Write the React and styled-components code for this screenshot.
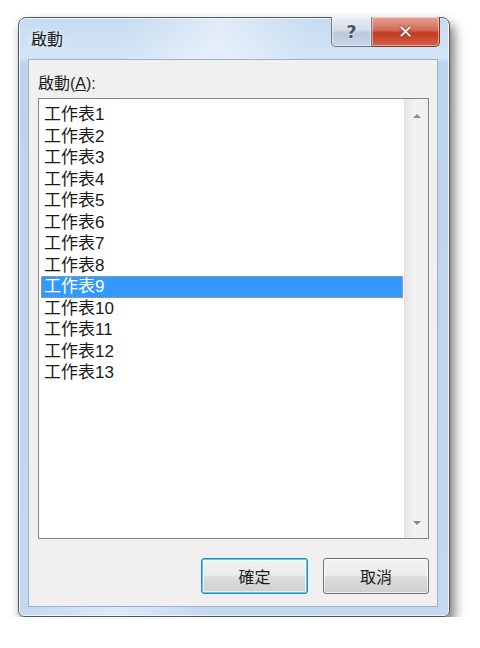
import React from 'react';
import styled, { createGlobalStyle } from 'styled-components';

const GlobalStyle = createGlobalStyle`
	body {
		margin: 0;
		background: #ffffff;
		font-family: "Liberation Sans", "Noto Sans CJK TC", sans-serif;
	}
`;

const Window = styled.div`
	box-sizing: border-box;
	width: 432px;
	height: 600px;
	margin: 17px 0 0 18px;
	display: flex;
	flex-direction: column;
	padding: 0 11px 9px 9px;
	border: 1px solid #505a66;
	border-radius: 8px 8px 6px 6px;
	background:
		linear-gradient(100deg, rgba(255, 255, 255, 0) 20%, rgba(255, 255, 255, 0.45) 38%, rgba(255, 255, 255, 0) 55%),
		linear-gradient(180deg, #c6dbf1 0%, #d4e4f6 40px, #bdd4ee 45px, #c3d8f1 100%);
	box-shadow:
		inset 0 0 0 1px rgba(255, 255, 255, 0.7),
		4px 7px 12px rgba(0, 0, 0, 0.55);
`;

const TitleBar = styled.div`
	height: 41px;
	display: flex;
	justify-content: space-between;
	align-items: flex-start;
`;

const Title = styled.div`
	padding: 12px 0 0 3px;
	font-size: 16px;
	line-height: 20px;
	color: #1b1b1b;
	text-shadow: 0 0 6px rgba(255, 255, 255, 0.9);
`;

const CaptionButtons = styled.div`
	display: flex;
	margin-right: -2px;
	margin-top: -1px;
`;

const CaptionButton = styled.div`
	box-sizing: border-box;
	width: ${({ wide }) => (wide ? 68 : 41)}px;
	height: 30px;
	display: flex;
	align-items: center;
	justify-content: center;
	border: 1px solid ${({ danger }) => (danger ? '#7d3a34' : '#6d7889')};
	border-top: none;
	border-radius: ${({ danger }) => (danger ? '0 0 5px 0' : '0 0 0 5px')};
	border-left: ${({ danger }) => (danger ? 'none' : '1px solid #6d7889')};
	background: ${({ danger }) =>
		danger
			? 'linear-gradient(180deg, #e7a396 0%, #d56b58 45%, #c2391f 55%, #d4624c 100%)'
			: 'linear-gradient(180deg, #e9eef5 0%, #d4dde9 45%, #bac8da 55%, #c9d6e6 100%)'};
	box-shadow: inset 0 0 0 1px rgba(255, 255, 255, 0.45);
	color: ${({ danger }) => (danger ? '#ffffff' : '#4a5564')};
	font-family: "DejaVu Sans", sans-serif;
	font-weight: bold;
	font-size: ${({ danger }) => (danger ? 18 : 18)}px;
	text-shadow: ${({ danger }) =>
		danger ? '0 0 2px #6b2016, 0 0 1px #6b2016' : '0 0 2px #ffffff, 0 0 1px #ffffff'};
`;

const Panel = styled.div`
	flex: 1;
	display: flex;
	flex-direction: column;
	background: #f0f0f0;
	border: 1px solid #9fb1c6;
	padding: 14px 8px 12px 9px;
`;

const Label = styled.div`
	font-size: 16px;
	line-height: 20px;
	color: #1e1e1e;
	margin-bottom: 4px;

	& u {
		text-decoration: underline;
	}
`;

const ListBox = styled.div`
	box-sizing: border-box;
	height: 441px;
	display: flex;
	background: #ffffff;
	border: 1px solid #828790;
`;

const Items = styled.div`
	flex: 1;
	padding: 5px 1px 0 2px;
`;

const Item = styled.div`
	box-sizing: border-box;
	height: 21.5px;
	line-height: 21px;
	padding-left: 3px;
	font-size: 17px;
	color: ${({ selected }) => (selected ? '#ffffff' : '#1a1a1a')};
	background: ${({ selected }) => (selected ? '#3399ff' : 'transparent')};
	outline: ${({ selected }) => (selected ? '1px dotted #d49b5c' : 'none')};
	outline-offset: -1px;
`;

const ScrollBar = styled.div`
	width: 23px;
	display: flex;
	flex-direction: column;
	justify-content: space-between;
	align-items: center;
	padding: 15px 0 13px;
	background: linear-gradient(90deg, #e6e6e6 0%, #f2f2f2 40%, #eeeeee 100%);
	border-left: 1px solid #e0e0e0;
`;

const Arrow = styled.div`
	width: 0;
	height: 0;
	border-left: 4px solid transparent;
	border-right: 4px solid transparent;
	${({ down }) =>
		down ? 'border-top: 4px solid #8a8a8a;' : 'border-bottom: 4px solid #8a8a8a;'}
`;

const ButtonRow = styled.div`
	display: flex;
	justify-content: flex-end;
	gap: 15px;
	margin-top: 19px;
`;

const Button = styled.button`
	box-sizing: border-box;
	width: ${({ w }) => w}px;
	height: 36px;
	font-family: "Liberation Sans", "Noto Sans CJK TC", sans-serif;
	font-size: 16px;
	color: #1e1e1e;
	border-radius: 3px;
	border: 1px solid ${({ primary }) => (primary ? '#3c7fb1' : '#707070')};
	background: linear-gradient(180deg, #f2f2f2 0%, #ebebeb 48%, #dddddd 52%, #cfcfcf 100%);
	box-shadow: ${({ primary }) =>
		primary
			? 'inset 0 0 0 1px #48d1f9, inset 0 0 0 2px rgba(255, 255, 255, 0.6)'
			: 'inset 0 0 0 1px rgba(255, 255, 255, 0.7)'};
	padding: 0;
`;

const sheets = Array.from({ length: 13 }, (_, i) => `工作表${i + 1}`);

export default function App() {
	return (
		<>
			<GlobalStyle />
			<Window>
				<TitleBar>
					<Title>啟動</Title>
					<CaptionButtons>
						<CaptionButton>?</CaptionButton>
						<CaptionButton wide danger>
							✕
						</CaptionButton>
					</CaptionButtons>
				</TitleBar>
				<Panel>
					<Label>
						啟動(<u>A</u>):
					</Label>
					<ListBox>
						<Items>
							{sheets.map((name, i) => (
								<Item key={name} selected={i === 8}>
									{name}
								</Item>
							))}
						</Items>
						<ScrollBar>
							<Arrow />
							<Arrow down />
						</ScrollBar>
					</ListBox>
					<ButtonRow>
						<Button primary w={107}>確定</Button>
						<Button w={106}>取消</Button>
					</ButtonRow>
				</Panel>
			</Window>
		</>
	);
}
